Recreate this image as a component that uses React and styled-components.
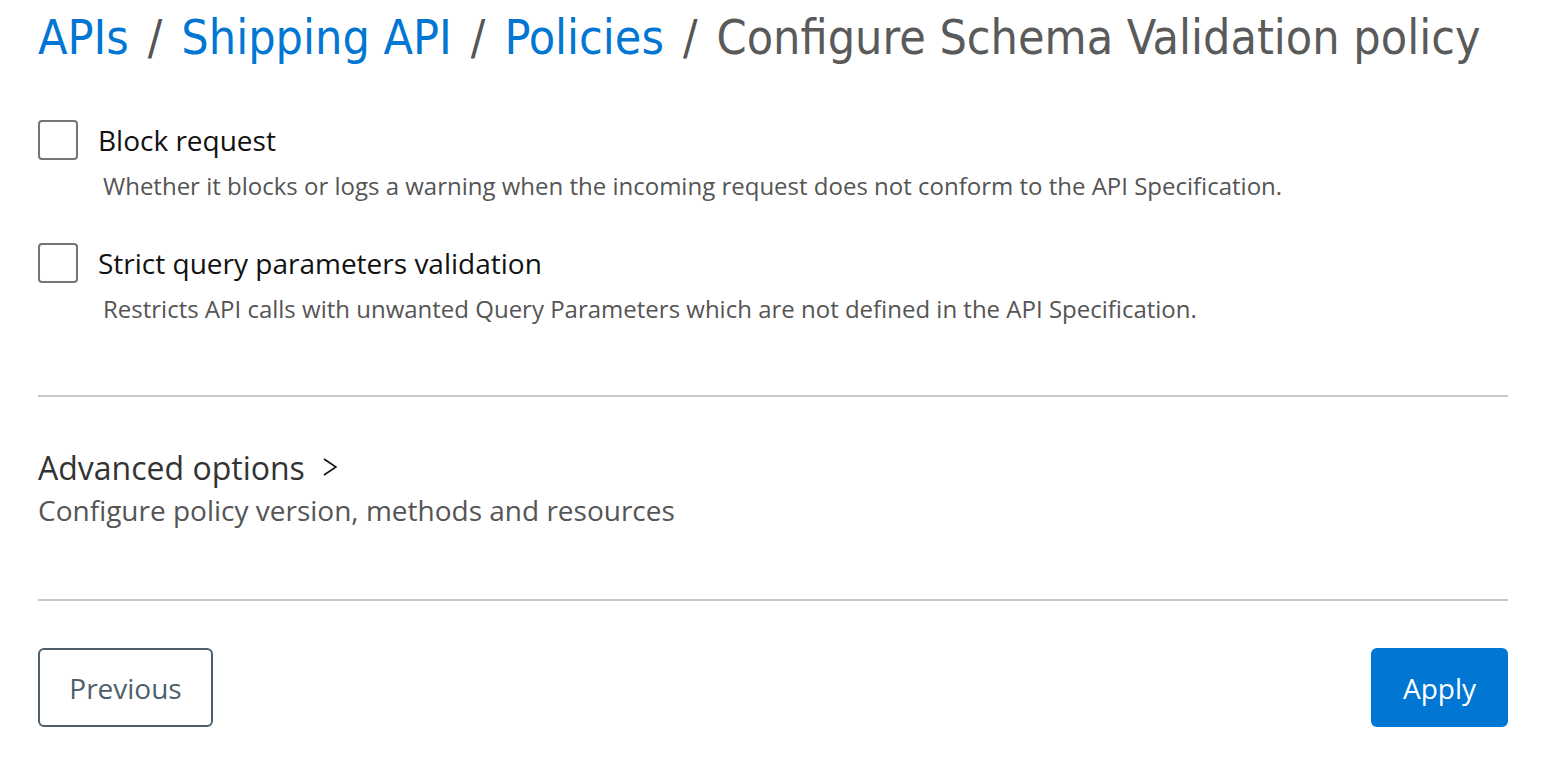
import React from "react";
import styled, { createGlobalStyle } from "styled-components";

const Global = createGlobalStyle`
  body {
    margin: 0;
    background: #ffffff;
    font-family: "Open Sans", "Liberation Sans", sans-serif;
  }
`;

const crumbs = [
  { label: "APIs", link: true },
  { label: "Shipping API", link: true },
  { label: "Policies", link: true },
  { label: "Configure Schema Validation policy", link: false },
];

const options = [
  {
    label: "Block request",
    hint: "Whether it blocks or logs a warning when the incoming request does not conform to the API Specification.",
  },
  {
    label: "Strict query parameters validation",
    hint: "Restricts API calls with unwanted Query Parameters which are not defined in the API Specification.",
  },
];

export default function App() {
  return (
    <>
      <Global />
      <Styled.Page>
        <Styled.Breadcrumb>
          {crumbs.map((c, i) => (
            <React.Fragment key={c.label}>
              {i > 0 && <Styled.Sep>/</Styled.Sep>}
              <Styled.Crumb $link={c.link}>{c.label}</Styled.Crumb>
            </React.Fragment>
          ))}
        </Styled.Breadcrumb>

        <Styled.Options>
          {options.map((o) => (
            <Styled.Option key={o.label}>
              <Styled.Row>
                <Styled.Box />
                <Styled.Label>{o.label}</Styled.Label>
              </Styled.Row>
              <Styled.Hint>{o.hint}</Styled.Hint>
            </Styled.Option>
          ))}
        </Styled.Options>

        <Styled.Section>
          <Styled.AdvTitle>
            Advanced options
            <Styled.Chevron viewBox="0 0 14 18" width="14" height="18">
              <path d="M1 1 L13 9 L1 17" fill="none" stroke="#111" strokeWidth="1.6" />
            </Styled.Chevron>
          </Styled.AdvTitle>
          <Styled.AdvSub>Configure policy version, methods and resources</Styled.AdvSub>
        </Styled.Section>

        <Styled.Footer>
          <Styled.Secondary>Previous</Styled.Secondary>
          <Styled.Primary>Apply</Styled.Primary>
        </Styled.Footer>
      </Styled.Page>
    </>
  );
}

const Styled = {
  Page: styled.div`
    width: 1470px;
    padding: 0 36px 0 38px;
  `,
  Breadcrumb: styled.h1`
    margin: 0;
    padding-top: 8px;
    height: 58px;
    display: flex;
    align-items: baseline;
    font-family: "DejaVu Sans Condensed", "Roboto", sans-serif;
    font-weight: 300;
    font-size: 48px;
    line-height: 58px;
    white-space: nowrap;
  `,
  Crumb: styled.span`
    color: ${(p) => (p.$link ? "#0176d3" : "#5a5a5a")};
  `,
  Sep: styled.span`
    color: #555;
    margin: 0 19px;
  `,
  Options: styled.div`
    margin-top: 54px;
    display: flex;
    flex-direction: column;
    gap: 41px;
  `,
  Option: styled.div`
    display: flex;
    flex-direction: column;
  `,
  Row: styled.div`
    display: flex;
    align-items: center;
    gap: 20px;
    height: 40px;
  `,
  Box: styled.span`
    width: 36px;
    height: 36px;
    border: 2px solid #757575;
    border-radius: 4px;
  `,
  Label: styled.span`
    font-size: 28px;
    color: #111;
  `,
  Hint: styled.div`
    margin-top: 10px;
    padding-left: 65px;
    font-size: 24px;
    line-height: 32px;
    color: #555;
  `,
  Section: styled.div`
    margin-top: 70px;
    border-top: 2px solid #c8c8c8;
    border-bottom: 2px solid #c8c8c8;
    padding: 51px 0 69px;
  `,
  AdvTitle: styled.div`
    display: flex;
    align-items: center;
    gap: 18px;
    font-size: 32px;
    line-height: 40px;
    color: #333;
  `,
  Chevron: styled.svg`
    display: block;
    margin-top: -2px;
  `,
  AdvSub: styled.div`
    margin-top: 2px;
    font-size: 28px;
    line-height: 40px;
    color: #555;
  `,
  Footer: styled.div`
    margin-top: 47px;
    display: flex;
    justify-content: space-between;
  `,
  Secondary: styled.button`
    width: 175px;
    height: 79px;
    background: #fff;
    border: 2px solid #4e5f6b;
    border-radius: 6px;
    color: #4e5f6b;
    font-family: "Open Sans", sans-serif;
    font-size: 28px;
  `,
  Primary: styled.button`
    width: 137px;
    height: 79px;
    background: #0176d3;
    border: none;
    border-radius: 6px;
    color: #fff;
    font-family: "Open Sans", sans-serif;
    font-size: 28px;
  `,
};
